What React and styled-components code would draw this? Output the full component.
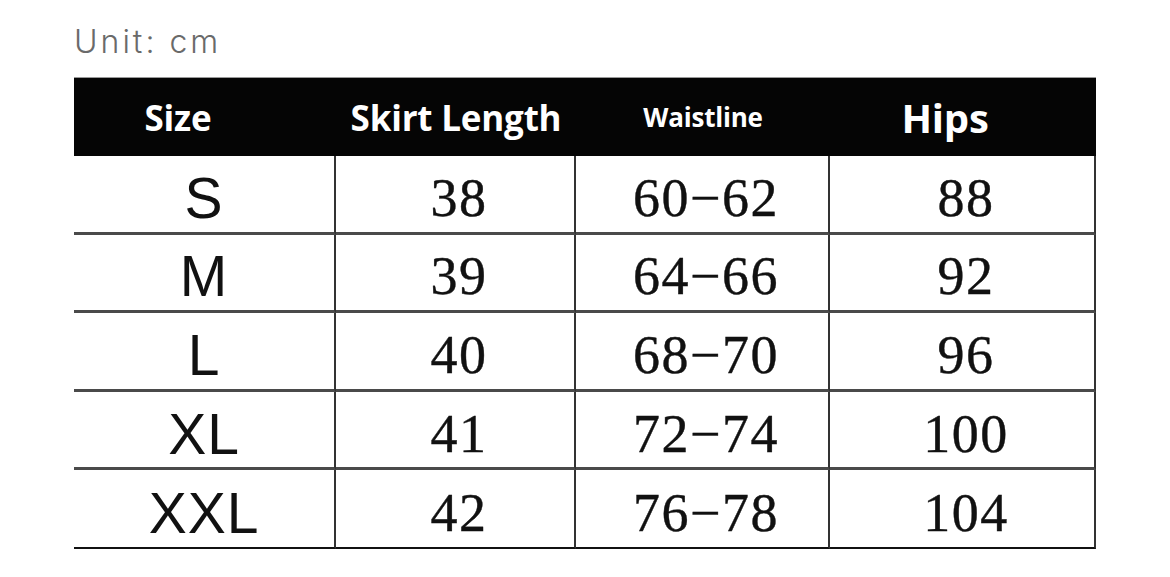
import React from 'react';
import styled, { createGlobalStyle } from 'styled-components';

const GlobalStyle = createGlobalStyle`
  html, body {
    margin: 0;
    padding: 0;
    background: #fff;
  }
`;

const Page = styled.div`
  width: 1170px;
  height: 577px;
  padding: 24px 0 0 74px;
  box-sizing: border-box;
  background: #fff;
  overflow: hidden;
`;

const Unit = styled.div`
  font-family: Inter, 'Liberation Sans', sans-serif;
  font-weight: 300;
  font-size: 32px;
  line-height: 36px;
  letter-spacing: 3px;
  color: #6a6a6a;
  margin-bottom: 17px;
`;

// 표 시작

const Table = styled.div`
  width: 1022px;
  display: grid;
  grid-template-columns: 262px 240px 254px 266px;
`;

const HeadCell = styled.div`
  height: 79px;
  background: #050505;
  border-top: 1px solid #9a9a9a;
  box-sizing: border-box;
  display: flex;
  align-items: center;
  justify-content: center;
  padding-left: ${props => props.shift < 0 ? 0 : props.shift * 2}px;
  padding-right: ${props => props.shift < 0 ? -props.shift * 2 : 0}px;
  color: #fff;
  font-family: 'Open Sans', 'Liberation Sans', sans-serif;
  font-weight: 700;
  font-size: ${props => props.size}px;
  letter-spacing: -0.2px;
`;

const Cell = styled.div`
  height: 78.6px;
  box-sizing: border-box;
  display: flex;
  align-items: center;
  justify-content: center;
  padding-top: 8px;
  padding-left: ${props => props.first ? 0 : 8}px;
  border-bottom: ${props => props.last ? '2px solid #111' : '3px solid #4a4a4a'};
  border-right: 2px solid #333;
  color: #111;
`;

const SizeText = styled.span`
  font-family: 'Liberation Sans', Arial, sans-serif;
  font-size: 57px;
  letter-spacing: 1px;
`;

const Num = styled.span`
  font-family: 'Liberation Serif', 'Times New Roman', serif;
  font-size: 54px;
  letter-spacing: 1.5px;
  -webkit-text-stroke: 0.4px #111;
`;

// 표 끝

const headers = [
  { label: 'Size', size: 35, shift: -27 },
  { label: 'Skirt Length', size: 35, shift: 0 },
  { label: 'Waistline', size: 26, shift: 0 },
  { label: 'Hips', size: 40, shift: -18 },
];

const rows = [
  ['S', '38', '60−62', '88'],
  ['M', '39', '64−66', '92'],
  ['L', '40', '68−70', '96'],
  ['XL', '41', '72−74', '100'],
  ['XXL', '42', '76−78', '104'],
];

function App() {
  return (
    <Page>
      <GlobalStyle />
      <Unit>Unit: cm</Unit>
      <Table>
        {headers.map((h) => (
          <HeadCell key={h.label} size={h.size} shift={h.shift}>
            {h.label}
          </HeadCell>
        ))}
        {rows.map((row, i) =>
          row.map((value, j) => (
            <Cell key={`${i}-${j}`} first={j === 0} last={i === rows.length - 1}>
              {j === 0 ? <SizeText>{value}</SizeText> : <Num>{value}</Num>}
            </Cell>
          ))
        )}
      </Table>
    </Page>
  );
}

export default App;
